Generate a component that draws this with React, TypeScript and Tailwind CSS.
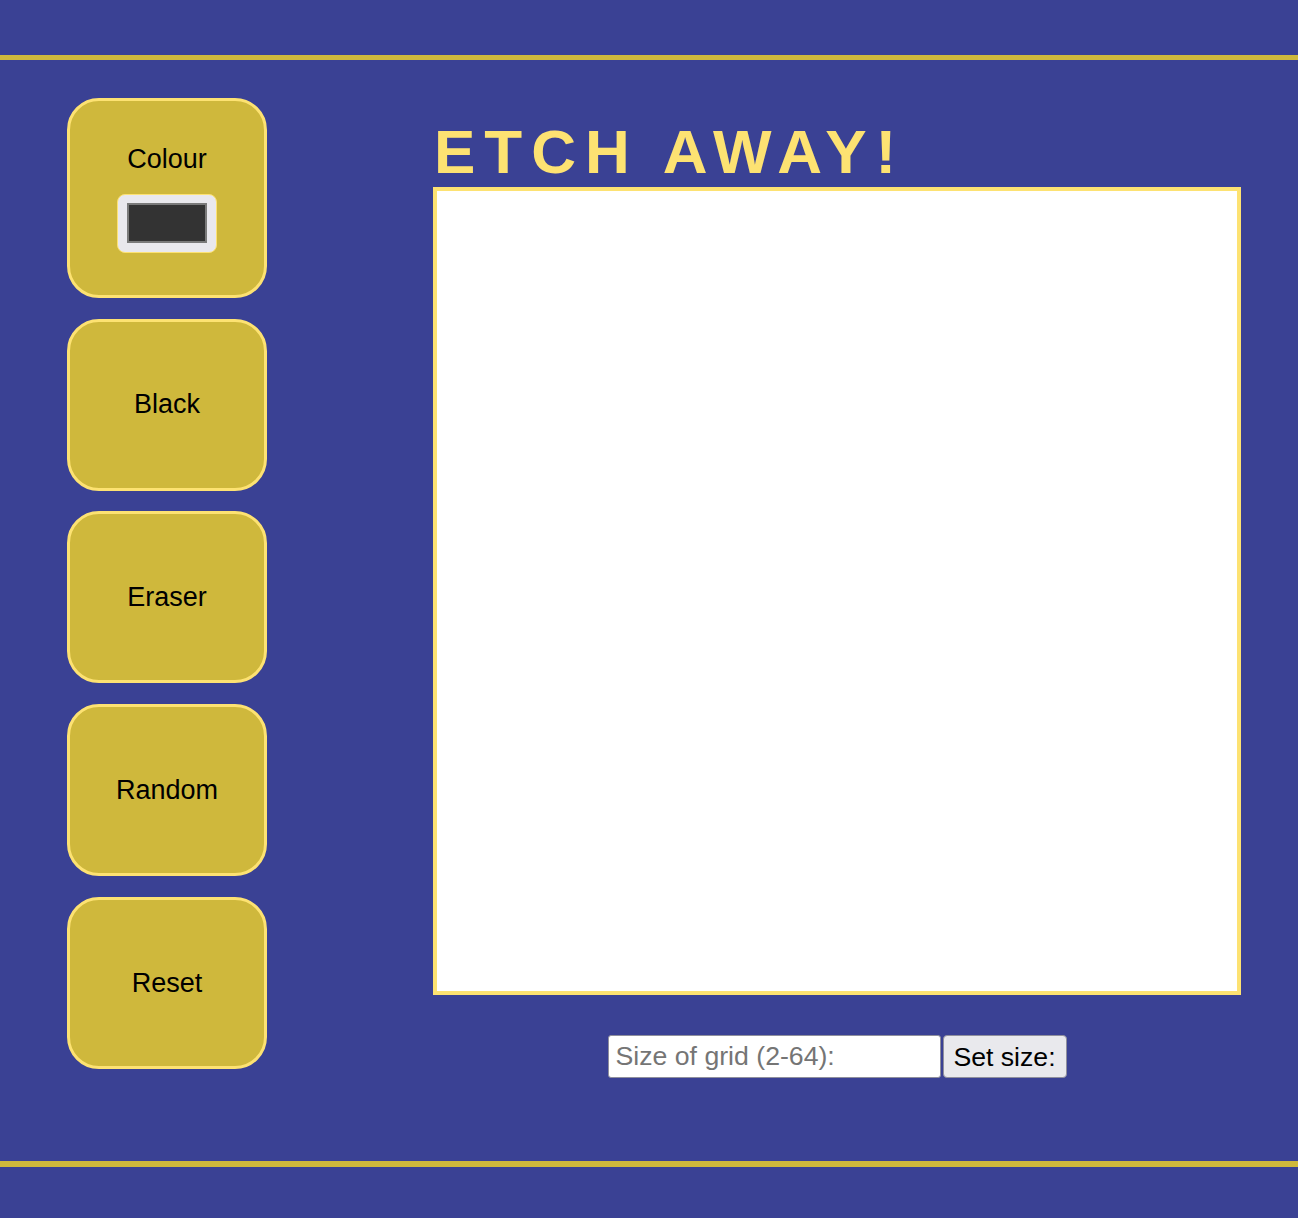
import React from "react";

const font = { fontFamily: '"Liberation Sans", Arial, sans-serif' };

function SideButton({ label }: { label: string }) {
  return (
    <button className="w-[200px] h-[172px] rounded-[32px] border-[3px] border-[#fde272] bg-[#cfb83c] text-black text-[27px] flex items-center justify-center">
      {label}
    </button>
  );
}

export default function App() {
  return (
    <div className="w-[1298px] min-h-[1218px] bg-[#3a4194] flex flex-col" style={font}>
      <header className="h-[60px] border-b-[5px] border-[#cfb83c]" />
      <main className="h-[1101px] flex">
        <aside className="ml-[67px] mt-[38px] w-[200px] flex flex-col gap-[20.7px]">
          <div className="w-[200px] h-[200px] rounded-[32px] border-[3px] border-[#fde272] bg-[#cfb83c] flex flex-col items-center justify-center gap-[20px]">
            <span className="text-black text-[27px] leading-[30px]">Colour</span>
            <div className="w-[100px] h-[59px] rounded-[8px] border border-[#fde272] bg-[#e9e8ed] flex items-center justify-center">
              <div className="w-[80px] h-[40px] border-2 border-[#7a7a7a] bg-[#333333]" />
            </div>
          </div>
          <SideButton label="Black" />
          <SideButton label="Eraser" />
          <SideButton label="Random" />
          <SideButton label="Reset" />
        </aside>
        <section className="ml-[166px] mt-[56px] flex flex-col w-[808px]">
          <h1 className="h-[71px] leading-[71px] text-[62px] font-bold tracking-[9px] text-[#fde272] pl-[1px]">
            ETCH AWAY!
          </h1>
          <div className="w-[808px] h-[808px] border-4 border-[#fde272] bg-white" />
          <div className="mt-[40px] flex justify-center items-stretch gap-[2px]">
            <input
              type="text"
              placeholder="Size of grid (2-64):"
              className="w-[333px] h-[43px] bg-white border border-[#8f8f9d] rounded-[3px] px-[7px] text-[26.67px] text-black placeholder:text-[#757575] outline-none"
              style={font}
            />
            <button
              className="w-[124px] h-[43px] bg-[#e9e9ed] border border-[#8f8f9d] rounded-[4px] text-[26.67px] text-black"
              style={font}
            >
              Set size:
            </button>
          </div>
        </section>
      </main>
      <footer className="h-[57px] border-t-[6px] border-[#cfb83c]" />
    </div>
  );
}
